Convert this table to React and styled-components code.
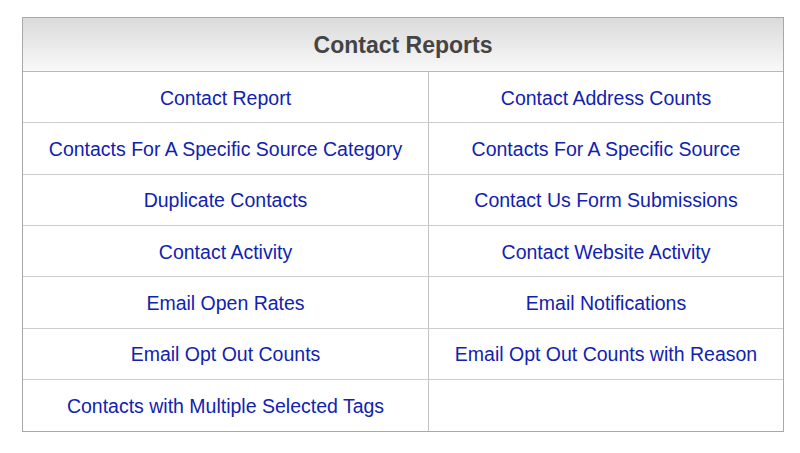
import React from 'react';
import styled, { createGlobalStyle } from 'styled-components';

const GlobalStyle = createGlobalStyle`
  body {
    margin: 0;
    background: #fff;
    font-family: "Liberation Sans", Arial, Helvetica, sans-serif;
  }
`;

const Page = styled.div`
  padding: 17px 0 0 22px;
`;

const ReportTable = styled.div`
  width: 760px;
  border: 1px solid #a8a8a8;
  box-shadow: 0 1px 0 #d0d0d0;
  display: grid;
  grid-template-columns: 406px 1fr;
  grid-template-rows: 54px;
  grid-auto-rows: 51.33px;
`;

const Header = styled.div`
  grid-column: 1 / -1;
  display: flex;
  align-items: center;
  justify-content: center;
  padding-top: 2px;
  background: linear-gradient(to bottom, #dadada, #f9f9f9);
  border-bottom: 1px solid #b8b8b8;
  font-size: 23px;
  font-weight: bold;
  color: #444;
`;

const Cell = styled.div`
  display: flex;
  align-items: center;
  justify-content: center;
  padding-top: 2px;
  border-bottom: ${(p) => (p.$last ? 'none' : '1px solid #cdcdcd')};
  border-right: ${(p) => (p.$left ? '1px solid #c4c4c4' : 'none')};
`;

const ReportLink = styled.a`
  font-size: 19.5px;
  color: #1122b0;
  text-decoration: none;
  cursor: pointer;
  &:hover {
    text-decoration: underline;
  }
`;

const reports = [
  ['Contact Report', 'Contact Address Counts'],
  ['Contacts For A Specific Source Category', 'Contacts For A Specific Source'],
  ['Duplicate Contacts', 'Contact Us Form Submissions'],
  ['Contact Activity', 'Contact Website Activity'],
  ['Email Open Rates', 'Email Notifications'],
  ['Email Opt Out Counts', 'Email Opt Out Counts with Reason'],
  ['Contacts with Multiple Selected Tags', ''],
];

const App = () => {
  return (
    <Page>
      <GlobalStyle />
      <ReportTable>
        <Header>Contact Reports</Header>
        {reports.map((row, i) => {
          const last = i === reports.length - 1;
          return row.map((name, j) => (
            <Cell key={`${i}-${j}`} $left={j === 0} $last={last}>
              {name && <ReportLink>{name}</ReportLink>}
            </Cell>
          ));
        })}
      </ReportTable>
    </Page>
  );
};

export default App;
